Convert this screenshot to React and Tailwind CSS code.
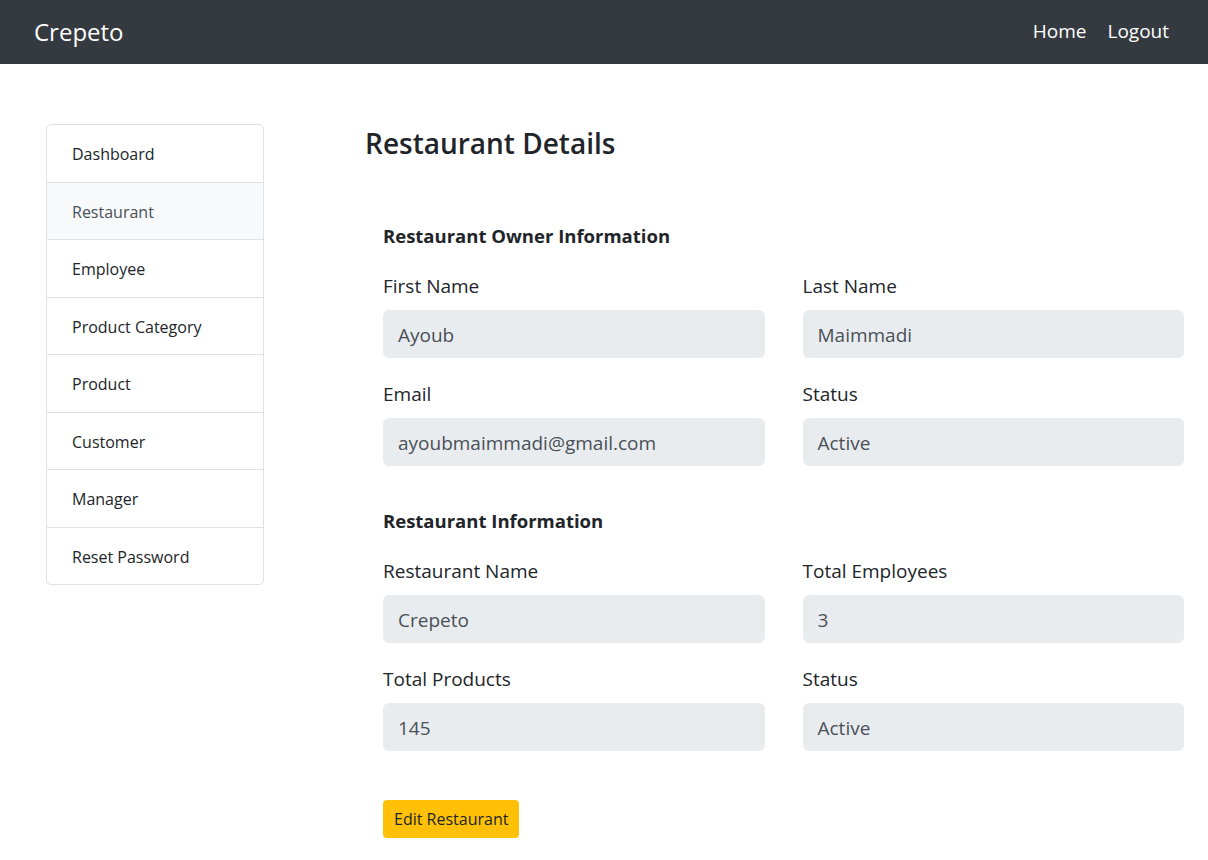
const menu = ['Dashboard', 'Restaurant', 'Employee', 'Product Category', 'Product', 'Customer', 'Manager', 'Reset Password']

const owner = [
  ['First Name', 'Ayoub'],
  ['Last Name', 'Maimmadi'],
  ['Email', 'ayoubmaimmadi@gmail.com'],
  ['Status', 'Active'],
]

const restaurant = [
  ['Restaurant Name', 'Crepeto'],
  ['Total Employees', '3'],
  ['Total Products', '145'],
  ['Status', 'Active'],
]

function Field({ label, value }) {
  return (
    <div className="mb-[21px]">
      <label className="block text-[19px] leading-[30px] text-[#212529] mb-[9px]">{label}</label>
      <div className="h-[48px] rounded-[6px] bg-[#e9ecef] px-[15px] pt-[3px] flex items-center text-[19px] text-[#495057]">
        {value}
      </div>
    </div>
  )
}

function Section({ title, fields }) {
  return (
    <div>
      <h5 className="text-[18.5px] font-bold leading-[27px] text-[#212529] mb-[21.5px]">{title}</h5>
      <div className="grid grid-cols-2 gap-x-[38px]">
        {fields.map(([l, v]) => (
          <Field key={l} label={l} value={v} />
        ))}
      </div>
    </div>
  )
}

export default function App() {
  return (
    <div className="min-h-[860px] bg-white" style={{ fontFamily: '"Segoe UI", "Open Sans", sans-serif' }}>
      <nav className="h-16 bg-[#343a40] flex items-center justify-between pl-[34px] pr-[39px]">
        <a className="text-white text-[24px] leading-none">Crepeto</a>
        <div className="flex items-center gap-[21px] text-white text-[19px] pb-[2px]">
          <a>Home</a>
          <a>Logout</a>
        </div>
      </nav>

      <div className="flex pt-[60px]">
        <aside className="ml-[46px] w-[218px] shrink-0 self-start rounded-[5px] border border-[#dee2e6] overflow-hidden">
          {menu.map((m, i) => (
            <div
              key={m}
              className={
                'px-[25px] pt-[17px] pb-[15px] text-[16px] leading-[24.5px] ' +
                (i > 0 ? 'border-t border-[#dee2e6] ' : '') +
                (m === 'Restaurant' ? 'bg-[#f8f9fa] text-[#495057]' : 'text-[#212529]')
              }
            >
              {m}
            </div>
          ))}
        </aside>

        <main className="ml-[101px] flex-1 pr-[24px]">
          <h1 className="text-[28px] leading-[36px] font-semibold text-[#212529] mt-[1px]">Restaurant Details</h1>
          <div className="pl-[18px] mt-[61px]">
            <Section title="Restaurant Owner Information" fields={owner} />
            <div className="mt-[20.5px]">
              <Section title="Restaurant Information" fields={restaurant} />
            </div>
            <button className="mt-[28px] h-[38px] px-[11px] rounded-[4px] bg-[#ffc107] text-[16px] text-[#212529]">
              Edit Restaurant
            </button>
          </div>
        </main>
      </div>
    </div>
  )
}
